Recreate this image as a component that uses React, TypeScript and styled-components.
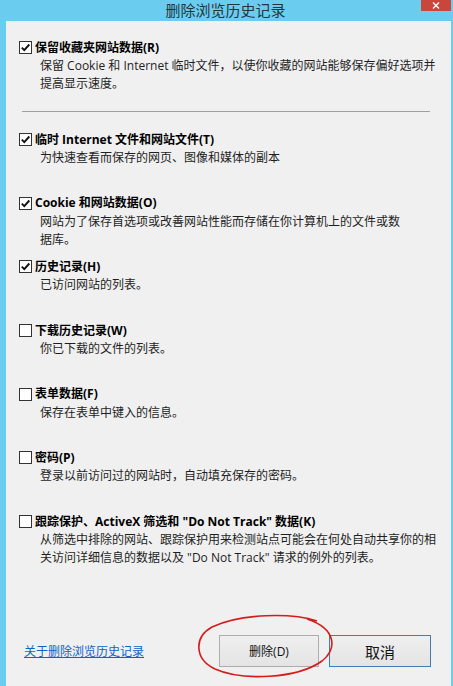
import * as React from 'react';
import styled, { createGlobalStyle } from 'styled-components';

type Option = {
  label: string;
  lines: string[];
  checked: boolean;
};

const OPTIONS: Option[] = [
  {
    label: '临时 Internet 文件和网站文件(T)',
    lines: ['为快速查看而保存的网页、图像和媒体的副本'],
    checked: true,
  },
  {
    label: 'Cookie 和网站数据(O)',
    lines: ['网站为了保存首选项或改善网站性能而存储在你计算机上的文件或数', '据库。'],
    checked: true,
  },
  {
    label: '历史记录(H)',
    lines: ['已访问网站的列表。'],
    checked: true,
  },
  {
    label: '下载历史记录(W)',
    lines: ['你已下载的文件的列表。'],
    checked: false,
  },
  {
    label: '表单数据(F)',
    lines: ['保存在表单中键入的信息。'],
    checked: false,
  },
  {
    label: '密码(P)',
    lines: ['登录以前访问过的网站时，自动填充保存的密码。'],
    checked: false,
  },
  {
    label: '跟踪保护、ActiveX 筛选和 "Do Not Track" 数据(K)',
    lines: [
      '从筛选中排除的网站、跟踪保护用来检测站点可能会在何处自动共享你的相',
      '关访问详细信息的数据以及 "Do Not Track" 请求的例外的列表。',
    ],
    checked: false,
  },
];

function CheckBox({ checked }: { checked: boolean }) {
  return (
    <Box>
      {checked && (
        <svg width="11" height="11" viewBox="0 0 11 11">
          <path d="M1.8 5.6 L4.3 8.1 L9.3 2.5" fill="none" stroke="#111" strokeWidth="1.9" />
        </svg>
      )}
    </Box>
  );
}

function OptionItem({ option, fixed }: { option: Option; fixed: boolean }) {
  return (
    <Item $fixed={fixed}>
      <LabelRow>
        <CheckBox checked={option.checked} />
        <Label>{option.label}</Label>
      </LabelRow>
      {option.lines.map((line) => (
        <Desc key={line}>{line}</Desc>
      ))}
    </Item>
  );
}

export default function App() {
  return (
    <React.Fragment>
      <GlobalStyle />
      <Frame>
        <TitleBar>
          <span />
          <Title>删除浏览历史记录</Title>
          <Close>
            <svg width="8" height="7" viewBox="0 0 8 7">
              <path d="M1 0.5 L7 6.5 M7 0.5 L1 6.5" stroke="#fff" strokeWidth="1.4" />
            </svg>
          </Close>
        </TitleBar>
        <Body>
          <OptionItem
            fixed={false}
            option={{
              label: '保留收藏夹网站数据(R)',
              lines: [
                '保留 Cookie 和 Internet 临时文件，以使你收藏的网站能够保存偏好选项并',
                '提高显示速度。',
              ],
              checked: true,
            }}
          />
          <Separator />
          {OPTIONS.map((option) => (
            <OptionItem key={option.label} option={option} fixed />
          ))}
          <Footer>
            <HelpLink href="#">关于删除浏览历史记录</HelpLink>
            <Buttons>
              <ButtonSlot>
                <Button $width={100}>删除(D)</Button>
                <Circle width="138" height="63" viewBox="0 0 138 63">
                  <path
                    d="M120 6 C95 -2, 45 -2, 15 12 C-3 22, -3 44, 18 54 C45 66, 100 64, 125 46 C140 34, 140 14, 110 4"
                    fill="none"
                    stroke="#d41c1c"
                    strokeWidth="1.6"
                  />
                </Circle>
              </ButtonSlot>
              <Button $width={102} $primary>
                取消
              </Button>
            </Buttons>
          </Footer>
        </Body>
      </Frame>
    </React.Fragment>
  );
}

const GlobalStyle = createGlobalStyle`
  html, body {
    margin: 0;
    padding: 0;
  }
  body {
    font-family: "Open Sans", "Noto Sans CJK SC", sans-serif;
  }
`;

const Frame = styled.div`
  width: 453px;
  height: 686px;
  box-sizing: border-box;
  padding: 0 2px 0 6px;
  background: #6acdef;
  display: flex;
  flex-direction: column;
`;

const TitleBar = styled.div`
  height: 21px;
  margin-left: -6px;
  display: grid;
  grid-template-columns: 1fr auto 1fr;
  align-items: start;
`;

const Title = styled.div`
  font-family: "Noto Sans CJK SC", sans-serif;
  font-size: 15px;
  line-height: 19px;
  color: #24353f;
`;

const Close = styled.div`
  justify-self: end;
  width: 30px;
  height: 11px;
  background: #c8463c;
  display: flex;
  align-items: center;
  justify-content: center;
`;

const Body = styled.div`
  flex: 1;
  background: #f0f0f0;
  display: flex;
  flex-direction: column;
  padding: 17px 0 0 13px;
`;

const Item = styled.div<{ $fixed: boolean }>`
  flex-shrink: 0;
  height: ${({ $fixed }) => ($fixed ? '63.7px' : 'auto')};
`;

const LabelRow = styled.div`
  display: flex;
  align-items: center;
  gap: 3px;
  height: 19px;
`;

const Box = styled.span`
  width: 13px;
  height: 13px;
  box-sizing: border-box;
  border: 1px solid #333;
  background: #fff;
  display: flex;
  align-items: center;
  justify-content: center;
`;

const Label = styled.span`
  font-size: 12px;
  font-weight: bold;
  line-height: 18px;
  color: #000;
  white-space: nowrap;
`;

const Desc = styled.div`
  padding-left: 21px;
  font-size: 12px;
  line-height: 18px;
  color: #1e1e1e;
  white-space: nowrap;
`;

const Separator = styled.div`
  height: 1px;
  background: #a0a0a0;
  margin: 18px 21px 18px 3px;
  flex-shrink: 0;
`;

const Footer = styled.div`
  margin-top: auto;
  display: flex;
  align-items: center;
  padding: 0 20px 19px 5px;
`;

const HelpLink = styled.a`
  font-family: "Noto Sans CJK SC", sans-serif;
  font-size: 12px;
  line-height: 18px;
  color: #0a64c8;
  text-decoration: underline;
`;

const Buttons = styled.div`
  margin-left: auto;
  display: flex;
  gap: 10px;
`;

const ButtonSlot = styled.div`
  position: relative;
`;

const Button = styled.button<{ $width: number; $primary?: boolean }>`
  width: ${({ $width }) => $width}px;
  height: 32px;
  box-sizing: border-box;
  border: 1px solid ${({ $primary }) => ($primary ? '#3d7fb8' : '#adadad')};
  background: linear-gradient(#efefef, #e4e4e4);
  font-family: "Open Sans", "Noto Sans CJK SC", sans-serif;
  font-size: ${({ $primary }) => ($primary ? '15px' : '12px')};
  color: #111;
  padding: 0;
`;

const Circle = styled.svg`
  position: absolute;
  left: -22px;
  top: -20px;
  pointer-events: none;
  overflow: visible;
`;
